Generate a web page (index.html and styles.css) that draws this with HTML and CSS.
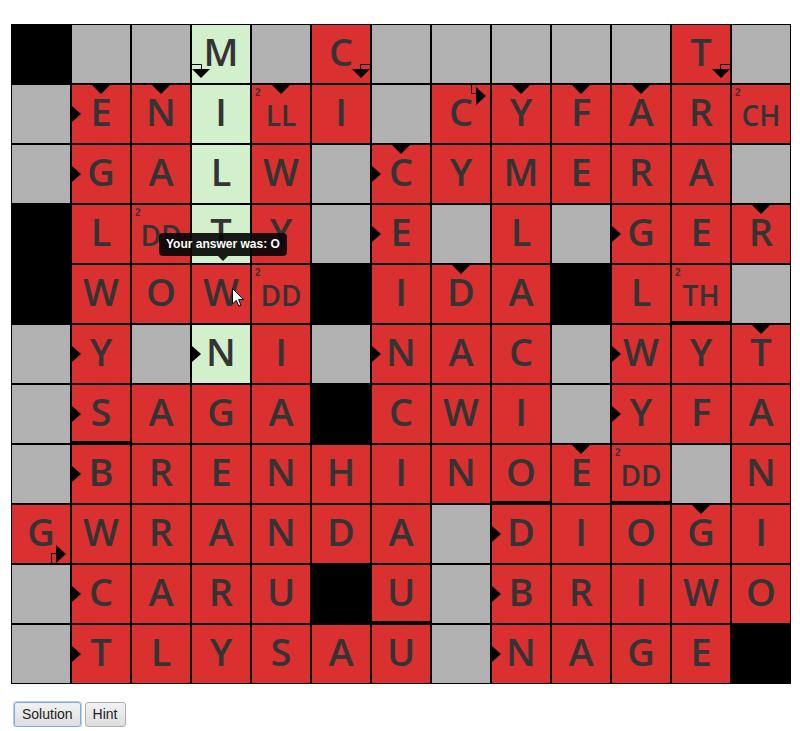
FILE: index.html
```html
<!DOCTYPE html>
<html>
<head>
<meta charset="utf-8">
<link rel="stylesheet" href="styles.css">
</head>
<body>
<div class="page">
  <div class="board">
    <div class="grid">
      <!-- row 0 -->
      <div class="c k"></div>
      <div class="c g"></div>
      <div class="c g"></div>
      <div class="c l">M<svg class="bent" viewBox="0 0 58 58"><path class="ln" d="M0 39.5H9.5V44"/><path d="M0 44H18L9 53Z"/></svg></div>
      <div class="c g"></div>
      <div class="c r">C<svg class="bent" viewBox="0 0 58 58"><path class="ln" d="M58 39.5H48.5V44"/><path d="M40 44H58L49 53Z"/></svg></div>
      <div class="c g"></div>
      <div class="c g"></div>
      <div class="c g"></div>
      <div class="c g"></div>
      <div class="c g"></div>
      <div class="c r">T<svg class="bent" viewBox="0 0 58 58"><path class="ln" d="M58 39.5H48.5V44"/><path d="M40 44H58L49 53Z"/></svg></div>
      <div class="c g"></div>
      <!-- row 1 -->
      <div class="c g"></div>
      <div class="c r a t">E</div>
      <div class="c r t">N</div>
      <div class="c l">I</div>
      <div class="c r t d"><span class="n">2</span>LL</div>
      <div class="c r">I</div>
      <div class="c g"></div>
      <div class="c r">C<svg class="bent" viewBox="0 0 58 58"><path class="ln" d="M39.5 0V8.5H44"/><path d="M44 2V20L54 11Z"/></svg></div>
      <div class="c r t">Y</div>
      <div class="c r t">F</div>
      <div class="c r t">A</div>
      <div class="c r">R</div>
      <div class="c r d"><span class="n">2</span>CH</div>
      <!-- row 2 -->
      <div class="c g"></div>
      <div class="c r a">G</div>
      <div class="c r">A</div>
      <div class="c l">L</div>
      <div class="c r">W</div>
      <div class="c g"></div>
      <div class="c r a t">C</div>
      <div class="c r">Y</div>
      <div class="c r">M</div>
      <div class="c r">E</div>
      <div class="c r">R</div>
      <div class="c r">A</div>
      <div class="c g"></div>
      <!-- row 3 -->
      <div class="c k"></div>
      <div class="c r">L</div>
      <div class="c r d"><span class="n">2</span>DD</div>
      <div class="c l">T</div>
      <div class="c r">Y</div>
      <div class="c g"></div>
      <div class="c r a">E</div>
      <div class="c g"></div>
      <div class="c r">L</div>
      <div class="c g"></div>
      <div class="c r a">G</div>
      <div class="c r">E</div>
      <div class="c r t">R</div>
      <!-- row 4 -->
      <div class="c k"></div>
      <div class="c r">W</div>
      <div class="c r">O</div>
      <div class="c r">W</div>
      <div class="c r d"><span class="n">2</span>DD</div>
      <div class="c k"></div>
      <div class="c r">I</div>
      <div class="c r t">D</div>
      <div class="c r">A</div>
      <div class="c k"></div>
      <div class="c r">L</div>
      <div class="c r d u"><span class="n">2</span>TH</div>
      <div class="c g"></div>
      <!-- row 5 -->
      <div class="c g"></div>
      <div class="c r a">Y</div>
      <div class="c g"></div>
      <div class="c l a">N</div>
      <div class="c r">I</div>
      <div class="c g"></div>
      <div class="c r a">N</div>
      <div class="c r">A</div>
      <div class="c r">C</div>
      <div class="c g"></div>
      <div class="c r a">W</div>
      <div class="c r">Y</div>
      <div class="c r t">T</div>
      <!-- row 6 -->
      <div class="c g"></div>
      <div class="c r a u">S</div>
      <div class="c r">A</div>
      <div class="c r">G</div>
      <div class="c r">A</div>
      <div class="c k"></div>
      <div class="c r">C</div>
      <div class="c r">W</div>
      <div class="c r">I</div>
      <div class="c g"></div>
      <div class="c r a">Y</div>
      <div class="c r">F</div>
      <div class="c r">A</div>
      <!-- row 7 -->
      <div class="c g"></div>
      <div class="c r a">B</div>
      <div class="c r">R</div>
      <div class="c r">E</div>
      <div class="c r">N</div>
      <div class="c r">H</div>
      <div class="c r">I</div>
      <div class="c r">N</div>
      <div class="c r u">O</div>
      <div class="c r t">E</div>
      <div class="c r d u"><span class="n">2</span>DD</div>
      <div class="c g"></div>
      <div class="c r">N</div>
      <!-- row 8 -->
      <div class="c r">G<svg class="bent" viewBox="0 0 58 58"><path class="ln" d="M39.5 58V48.5H44"/><path d="M44 40V58L54 49Z"/></svg></div>
      <div class="c r">W</div>
      <div class="c r">R</div>
      <div class="c r">A</div>
      <div class="c r">N</div>
      <div class="c r">D</div>
      <div class="c r">A</div>
      <div class="c g"></div>
      <div class="c r a">D</div>
      <div class="c r">I</div>
      <div class="c r">O</div>
      <div class="c r t">G</div>
      <div class="c r">I</div>
      <!-- row 9 -->
      <div class="c g"></div>
      <div class="c r a">C</div>
      <div class="c r">A</div>
      <div class="c r">R</div>
      <div class="c r">U</div>
      <div class="c k"></div>
      <div class="c r u">U</div>
      <div class="c g"></div>
      <div class="c r a">B</div>
      <div class="c r">R</div>
      <div class="c r">I</div>
      <div class="c r">W</div>
      <div class="c r">O</div>
      <!-- row 10 -->
      <div class="c g"></div>
      <div class="c r a">T</div>
      <div class="c r">L</div>
      <div class="c r">Y</div>
      <div class="c r">S</div>
      <div class="c r">A</div>
      <div class="c r">U</div>
      <div class="c g"></div>
      <div class="c r a">N</div>
      <div class="c r">A</div>
      <div class="c r">G</div>
      <div class="c r">E</div>
      <div class="c k"></div>
    </div>
    <div class="tooltip">Your answer was: O</div>
    <svg class="cursor" viewBox="0 0 12 19" width="12" height="19"><path d="M0.5 0.5V16L4.3 12.4L6.8 18.2L9 17.2L6.6 11.6H11.5Z" fill="#fff" stroke="#000" stroke-width="1" stroke-linejoin="round"/></svg>
  </div>
  <div class="buttons">
    <button class="btn focus">Solution</button>
    <button class="btn">Hint</button>
  </div>
</div>
</body>
</html>
```
FILE: styles.css
```css
html, body {
  margin: 0;
  padding: 0;
  background: #fff;
}

.page {
  padding: 24px 0 0 11px;
  font-family: "Liberation Sans", Arial, sans-serif;
}

.board {
  position: relative;
  width: max-content;
}

.grid {
  display: grid;
  grid-template-columns: repeat(13, 58px);
  grid-auto-rows: 58px;
  gap: 2px;
  padding: 1px;
  background: #000;
  width: max-content;
}

.c {
  position: relative;
  display: flex;
  align-items: center;
  justify-content: center;
  box-sizing: border-box;
  padding-bottom: 6px;
  font-family: "Open Sans", "DejaVu Sans", sans-serif;
  font-weight: 600;
  font-size: 38px;
  color: #343434;
  line-height: 1;
}

.r { background: #da3030; }
.g { background: #b1b1b1; }
.k { background: #000; }
.l { background: #d3f0cc; }

.d {
  font-size: 28px;
  padding-bottom: 0;
  padding-top: 2px;
}

.n {
  position: absolute;
  top: 3px;
  left: 3px;
  font-family: "Liberation Sans", Arial, sans-serif;
  font-size: 10px;
  font-weight: 700;
  color: #333;
}

.u {
  box-shadow: inset 0 -2px 0 #000;
}

.t::before {
  content: "";
  position: absolute;
  top: 0;
  left: 50%;
  margin-left: -9px;
  border-left: 9px solid transparent;
  border-right: 9px solid transparent;
  border-top: 9px solid #000;
}

.a::after {
  content: "";
  position: absolute;
  left: 0;
  top: 50%;
  margin-top: -8px;
  border-top: 8px solid transparent;
  border-bottom: 8px solid transparent;
  border-left: 9px solid #000;
}

.bent {
  position: absolute;
  left: 0;
  top: 0;
  width: 58px;
  height: 58px;
  overflow: visible;
}

.bent path { fill: #000; }
.bent .ln { fill: none; stroke: #000; stroke-width: 1; }

.tooltip {
  position: absolute;
  left: 148px;
  top: 209px;
  height: 23px;
  line-height: 23px;
  padding: 0 7px;
  background: rgba(8, 8, 8, 0.92);
  color: #fff;
  font-family: "Liberation Sans", Arial, sans-serif;
  font-weight: 700;
  font-size: 12px;
  border-radius: 4px;
  white-space: nowrap;
}

.tooltip::after {
  content: "";
  position: absolute;
  left: 50%;
  bottom: -5px;
  margin-left: -5px;
  border-left: 5px solid transparent;
  border-right: 5px solid transparent;
  border-top: 5px solid rgba(8, 8, 8, 0.92);
}

.cursor {
  position: absolute;
  left: 221px;
  top: 264px;
}

.buttons {
  display: flex;
  gap: 4px;
  margin-top: 18px;
  margin-left: 3px;
}

.btn {
  font-family: "Liberation Sans", Arial, sans-serif;
  font-size: 14px;
  line-height: 17px;
  padding: 3px 7px;
  color: #222;
  background: linear-gradient(#f2f2f2, #dedede);
  border: 1px solid #adadad;
  border-radius: 3px;
  margin: 0;
}

.btn.focus {
  border-color: #7eaae6;
  box-shadow: 0 0 0 1px #b5cff2;
}
```
